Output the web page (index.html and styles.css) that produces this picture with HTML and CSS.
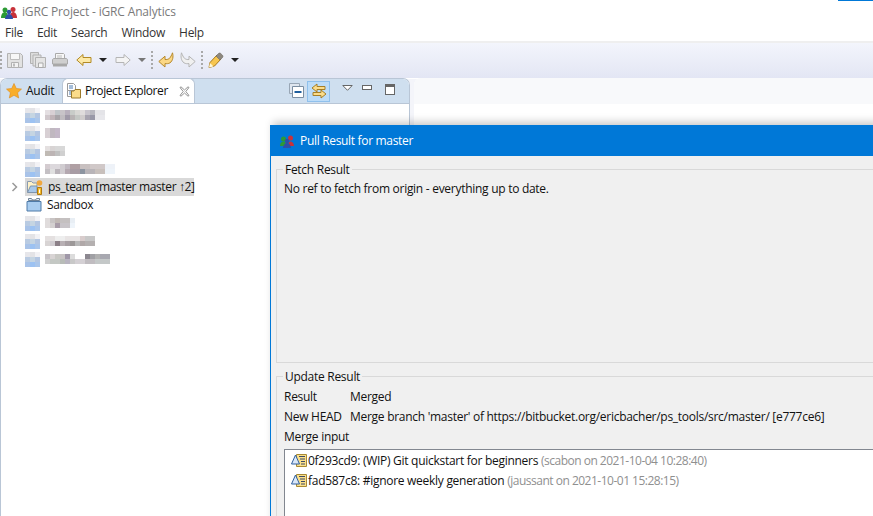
FILE: index.html
```html
<!DOCTYPE html>
<html lang="en">
<head>
<meta charset="utf-8">
<title>iGRC Project - iGRC Analytics</title>
<link rel="stylesheet" href="styles.css">
</head>
<body>
<div class="app">
  <div class="titlebar">
    <svg class="ico16" viewBox="0 0 16 16"><circle cx="4" cy="6" r="2.500" fill="#2c9a35"/><circle cx="12" cy="5.500" r="2.500" fill="#c8323a"/><circle cx="8" cy="8" r="2.200" fill="#2f4fa8"/><path d="M0 14c0-4 2-6 4-6s3 2 3 6z" fill="#2c9a35"/><path d="M9 14c0-4 1-6 3-6s4 2 4 6z" fill="#c8323a"/><path d="M4 15c0-3 2-5 4-5s4 2 4 5z" fill="#2f4fa8"/></svg>
    <span>iGRC Project - iGRC Analytics</span>
    <div class="accent"></div>
  </div>
  <nav class="menubar"><span>File</span><span>Edit</span><span>Search</span><span>Window</span><span>Help</span></nav>
  <div class="toolbar">
    <i class="grip g-first"></i>
    <svg class="ico16 t-save" viewBox="0 0 16 16"><path d="M.5 1.500h13l2 2v12H.5z" fill="#e2e2e2" stroke="#b2b2b2"/><path d="M3.500 1.500h9v6h-9z" fill="#f7f7f7" stroke="#bdbdbd"/><path d="M4.500 10.500h7v5h-7z" fill="#f2f2f2" stroke="#b2b2b2"/><path d="M6 11.500h2v3H6z" fill="#bbb"/></svg>
    <svg class="ico16 t-all" viewBox="0 0 16 16"><path d="M.5.500h8v3h-4v8h-4z" fill="#dcdcdc" stroke="#b2b2b2"/><path d="M3 3h8v3H6v8H3z" fill="#e2e2e2" stroke="#b2b2b2"/><path d="M5.500 5.500h10v10h-10z" fill="#e4e4e4" stroke="#b2b2b2"/><path d="M8.500 11h4.500v4.500H8.500z" fill="#f6f6f6" stroke="#aaa"/></svg>
    <svg class="ico16 t-print" viewBox="0 0 16 16"><path d="M3.500 1.500h8l1 1v5h-9z" fill="#f7f7f7" stroke="#aaa"/><path d="M5 4h5M5 6h5" stroke="#bbb"/><path d="M.5 8c0-1 .8-1.500 1.500-1.500h12c.8 0 1.500.5 1.500 1.500v4H.5z" fill="#cfcfcf" stroke="#aaa"/><path d="M1 12h14v2.500H1z" fill="#a8a8a8"/></svg>
    <svg class="ico16 t-back" viewBox="0 0 16 16"><path d="M.8 8L7 2.500V5.500h8v5H7v3z" fill="#fde9a6" stroke="#b28a25"/></svg>
    <b class="caret"></b>
    <svg class="ico16 t-fwd" viewBox="0 0 16 16"><path d="M15.200 8L9 2.500V5.500H1v5h8v3z" fill="#f4f4f4" stroke="#b5b5b5"/></svg>
    <b class="caret dim"></b>
    <i class="grip g-mid"></i>
    <svg class="ico16 t-undo" viewBox="0 0 16 16"><path d="M14.500 .8c1 3.500 .5 8-2.500 10-1.500 1-3.500 1-5 .8V15L.8 9.500 7 4.200v3.300c1.500.2 3 0 4.500-1.200 1.200-1.200 2-3 3-5.500z" fill="#fbd784" stroke="#b6882a"/></svg>
    <svg class="ico16 t-redo" viewBox="0 0 16 16"><path d="M1.500 .8c-1 3.500-.5 8 2.500 10 1.500 1 3.500 1 5 .8V15l6.200-5.500L9 4.200v3.300C7.500 7.700 6 7.500 4.500 6.300 3.300 5.100 2.500 3.300 1.500.8z" fill="#f0f0f0" stroke="#b5b5b5"/></svg>
    <i class="grip g-last"></i>
    <svg class="ico16 t-pin" viewBox="0 0 16 16"><path d="M2 10.500L9 3l4 4-6.500 7L1 15.500z" fill="#f7c64f" stroke="#a87a1c"/><path d="M8 4l4 4 2.500-2.500c.6-.7.6-1.500 0-2.200l-1.800-1.800c-.7-.6-1.500-.6-2.200 0z" fill="#8d887e" stroke="#6a665e" stroke-width=".6"/><path d="M1 15.500l1-4.500 3.500 3.500z" fill="#fff8d8"/></svg>
    <b class="caret"></b>
  </div>
  <main class="workbench">
    <section class="explorer">
      <header class="tabbar">
        <div class="tab tab-audit">
          <svg class="ico16" viewBox="0 0 16 16"><path d="M8 .5l2.300 5 5.200.6-3.900 3.600 1.100 5.300L8 12.300 3.300 15l1.100-5.300L.5 6.100l5.200-.6z" fill="#f9ae2a" stroke="#df8a18" stroke-width=".6"/></svg>
          <span>Audit</span>
        </div>
        <div class="tab tab-active">
          <svg class="ico16" viewBox="0 0 16 16"><path d="M1.500 .5h6l2 2v5h-8z" fill="#fff" stroke="#9a9a9a"/><path d="M1.500 7.500v6h4" fill="none" stroke="#9a9a9a"/><path d="M3 3h4M3 5h4M3 9h2M3 11h2" stroke="#4a7cb5"/><path d="M5.500 8h2.500l1-1.500h5.500V15H5.500z" fill="#fbdc8a" stroke="#9c7a2a"/></svg>
          <span>Project Explorer</span>
          <svg class="closex" viewBox="0 0 11 11"><path d="M1 1.500L2 .8 5.500 4 9 .8l1 .7L6.800 5.500 10 9.500 9 10.200 5.500 7 2 10.200l-1-.7 3.200-4z" fill="#fff" stroke="#777" stroke-width=".8"/></svg>
        </div>
        <div class="viewtools">
          <svg class="ico16" viewBox="0 0 16 16"><path d="M.5 .5h10v10H.5z" fill="#dfe6ef" stroke="#98a6b5"/><path d="M3.500 3.500h11v11h-11z" fill="#fff" stroke="#7b8ea2"/><path d="M5.500 9h7" stroke="#1f5f9e" stroke-width="2"/></svg>
          <span class="toggled"><svg class="ico16" viewBox="0 0 16 16"><path d="M1 5l5-4v2.500h8v3H6V9z" fill="#fbdc8a" stroke="#a57f28"/><path d="M15 11l-5-4v2.500H2v3h8V15z" fill="#fbdc8a" stroke="#a57f28"/></svg></span>
          <svg class="viewmenu" viewBox="0 0 11 6"><path d="M.8.500h9.400L5.500 5.300z" fill="#fff" stroke="#666"/></svg>
          <i class="minbtn"></i>
          <i class="maxbtn"></i>
        </div>
      </header>
      <ul class="tree">
        <li class="row"><i class="pix"></i><i class="blur b1"></i></li>
        <li class="row"><i class="pix"></i><i class="blur b2"></i></li>
        <li class="row"><i class="pix"></i><i class="blur b3"></i></li>
        <li class="row"><i class="pix"></i><i class="blur b4"></i></li>
        <li class="row selected">
          <svg class="twisty" viewBox="0 0 8 10"><path d="M1.500 1l4 4-4 4" fill="none" stroke="#999" stroke-width="1.500"/></svg>
          <svg class="ico16 proj" viewBox="0 0 16 16"><path d="M.5 13.500V2.500h4l1.500 1.500h4V7" fill="#fff2c8" stroke="#8a9bb0"/><path d="M.5 13.500L3.500 7H10v6.500z" fill="#a8c8ea" stroke="#7f95ad"/><path d="M10.500 8.500h4v7h-4z" fill="#f4bb2e" stroke="#b27a10"/><path d="M12 10.500h1v3.500h-1z" fill="#fff"/><circle cx="12.500" cy="4" r="2.800" fill="#f0a840"/></svg>
          <span>ps_team [master master ↑2]</span>
        </li>
        <li class="row">
          <svg class="ico16 proj sandbox" viewBox="0 0 16 16"><path d="M2.500 3.500V1.500h3l1 1.500h3l1-1.500h3v2z" fill="#e8eef5" stroke="#6f8296"/><path d="M1 4.500h14v9.500H1z" fill="#a9cdf0" stroke="#4f7ba8"/></svg>
          <span>Sandbox</span>
        </li>
        <li class="row"><i class="pix"></i><i class="blur b5"></i></li>
        <li class="row"><i class="pix"></i><i class="blur b6"></i></li>
        <li class="row"><i class="pix"></i><i class="blur b7"></i></li>
      </ul>
    </section>
    <section class="editor"><div class="editor-head"></div></section>
  </main>
  <div class="dialog">
    <div class="dialog-title">
      <svg class="ico16" viewBox="0 0 16 16"><circle cx="4.500" cy="6" r="2.500" fill="#2c9a35"/><circle cx="11.500" cy="5" r="2.500" fill="#c8323a"/><circle cx="8" cy="8" r="2.200" fill="#2f4fa8"/><path d="M1 13c0-3 1.500-4.500 3.500-4.500S7 10 7 13z" fill="#2c9a35"/><path d="M9 13c0-3 1-4.500 2.500-4.500S15 10 15 13z" fill="#c8323a"/><path d="M4 15c0-3 2-5 4-5s4 2 4 5z" fill="#2f4fa8"/></svg>
      <span>Pull Result for master</span>
    </div>
    <div class="dialog-body">
      <fieldset class="group fetch">
        <legend>Fetch Result</legend>
        <p>No ref to fetch from origin - everything up to date.</p>
      </fieldset>
      <fieldset class="group update">
        <legend>Update Result</legend>
        <dl class="facts">
          <dt>Result</dt><dd>Merged</dd>
          <dt>New HEAD</dt><dd>Merge branch 'master' of https://bitbucket.org/ericbacher/ps_tools/src/master/ [e777ce6]</dd>
        </dl>
        <div class="input-label">Merge input</div>
        <div class="commits">
          <div class="commit">
            <svg class="ico16" viewBox="0 0 16 16"><path d="M5.500 1.500h10v12h-10z" fill="#fbe08a" stroke="#a98a35"/><path d="M8 3.500h6M9 6h5M10 8.500h4M10 11h4" stroke="#3c4a66"/><path d="M4.500 2L.5 11h8z" fill="#dbe8f8" stroke="#2f5f9f"/></svg>
            <span>0f293cd9: (WIP) Git quickstart for beginners <em>(scabon on 2021-10-04 10:28:40)</em></span>
          </div>
          <div class="commit">
            <svg class="ico16" viewBox="0 0 16 16"><path d="M5.500 1.500h10v12h-10z" fill="#fbe08a" stroke="#a98a35"/><path d="M8 3.500h6M9 6h5M10 8.500h4M10 11h4" stroke="#3c4a66"/><path d="M4.500 2L.5 11h8z" fill="#dbe8f8" stroke="#2f5f9f"/></svg>
            <span>fad587c8: #ignore weekly generation <em>(jaussant on 2021-10-01 15:28:15)</em></span>
          </div>
        </div>
      </fieldset>
    </div>
  </div>
</div>
</body>
</html>
```

FILE: styles.css
```css
* { box-sizing: border-box; }
html, body { margin: 0; padding: 0; height: 100%; overflow: hidden; }
body { font: 12px/16px "Open Sans", "Noto Sans", sans-serif; letter-spacing: -.28px; color: #111; background: #fff; }
.app { position: relative; width: 873px; height: 516px; overflow: hidden; display: flex; flex-direction: column; }
.ico16 { width: 16px; height: 16px; flex: none; display: block; }

.titlebar { height: 23px; display: flex; align-items: center; gap: 5px; padding: 1px 0 0 1px; color: #7a7a7a; position: relative; flex: none; letter-spacing: -.16px; }
.accent { position: absolute; right: 0; top: 0; width: 35px; height: 1px; background: #0078d7; }
.menubar { height: 18px; display: flex; gap: 14px; padding: 2px 0 0 5px; align-items: center; color: #333; flex: none; }

.toolbar { height: 37px; border-top: 2px solid #efefef; background: linear-gradient(#f3f5fc, #e3e6f4); display: flex; align-items: center; flex: none; padding-bottom: 2px; }
.grip { width: 2px; height: 18px; border-left: 2px dotted #a9a9a9; flex: none; }
.g-first { margin-left: 0; }
.t-save { margin-left: 5px; }
.t-all { margin-left: 7px; }
.t-print { margin-left: 6px; }
.t-back { margin-left: 8px; }
.t-fwd { margin-left: 8px; }
.g-mid { margin-left: 5px; }
.t-undo { margin-left: 5px; }
.t-redo { margin-left: 6px; }
.g-last { margin-left: 5px; }
.t-pin { margin-left: 5px; }
.caret { width: 0; height: 0; border: 4px solid transparent; border-top: 4px solid #222; border-bottom: 0; margin: 1px 0 0 7px; flex: none; }
.caret.dim { border-top-color: #777; }

.workbench { flex: 1; display: flex; gap: 4px; background: #f4f5fa; min-height: 0; border-top: 1px solid #fff; }
.explorer { width: 410px; background: #fff; border: 1px solid #b9c6d6; border-width: 1px 1px 0 1px; border-radius: 7px 7px 0 0; display: flex; flex-direction: column; flex: none; margin-top: -1px; }
.tabbar { height: 25px; background: #cfdfef; display: flex; align-items: flex-start; border-radius: 6px 6px 0 0; border-bottom: 1px solid #b9c6d6; flex: none; }
.tab { display: flex; align-items: center; white-space: nowrap; }
.tab-audit { width: 61px; height: 24px; padding-left: 5px; gap: 4px; }
.tab-active { width: 133px; padding-left: 3px; background: #fff; border: 1px solid #b9c6d6; border-bottom: 0; border-radius: 6px 6px 0 0; height: 25px; gap: 3px; margin-top: -1px; letter-spacing: -.4px; }
.closex { width: 11px; height: 11px; margin-left: 8px; flex: none; }
.viewtools { margin-left: auto; display: flex; align-items: center; height: 24px; padding-right: 14px; }
.toggled { width: 23px; height: 21px; background: #bcdcf8; border: 1px solid #8fc0ec; display: flex; align-items: center; justify-content: center; margin-left: 2px; }
.viewmenu { width: 11px; height: 6px; margin: -6px 0 0 12px; flex: none; }
.minbtn { width: 10px; height: 5px; margin: -7px 0 0 9px; border: 1px solid #666; background: #fff; flex: none; }
.maxbtn { width: 10px; height: 11px; margin: -3px 0 0 13px; border: 1px solid #666; border-top-width: 3px; background: #fff; flex: none; }

.tree { list-style: none; margin: 0; padding: 2px 0 0 0; }
.row { height: 18px; display: flex; align-items: center; padding-left: 24px; position: relative; letter-spacing: -.36px; }
.row.selected { background: #d9d9d9; margin-left: 24px; width: 169px; padding-left: 0; }
.row span { margin-left: 5px; white-space: nowrap; }
.proj { margin-left: 2px; }
.sandbox { margin-left: 1px; }
.twisty { position: absolute; left: -14px; top: 4px; width: 8px; height: 10px; }
.pix { width: 15px; height: 15px; flex: none; background:
  linear-gradient(90deg, #e6e6ea 33.3%, #e3e3e6 33.3% 66.6%, #f2f2f5 66.6%) top / 100% 5px no-repeat,
  linear-gradient(90deg, #b9cbe2 33.3%, #c5d5e2 33.3% 66.6%, #b3c6e2 66.6%) center / 100% 5px no-repeat,
  linear-gradient(90deg, #a9c3e8 33.3%, #9cc2f2 33.3% 66.6%, #aac6ea 66.6%) bottom / 100% 5px no-repeat; }
.blur { height: 10px; margin-left: 5px; }
.b1 { width: 60px; background:
  linear-gradient(90deg, #e4dfe2 0 5px, #d8d0d4 5px 10px, #c0c4c8 10px 15px, #c8c4c8 15px 20px, #b8b0bc 20px 25px, #c8ccc8 25px 30px, #d8d8d4 30px 35px, #e0dcdc 35px 40px, #c8c4cc 40px 45px, #b8b8c0 45px 50px, #e4e4e8 50px 60px) top / 100% 5px no-repeat,
  linear-gradient(90deg, #d0c8cc 0 5px, #c0b4b8 5px 10px, #a8a4a8 10px 15px, #c0bcc0 15px 20px, #a09aa8 20px 25px, #b8b4b4 25px 30px, #c4c8c4 30px 35px, #d0cccc 35px 40px, #a8a4b0 40px 45px, #9898a8 45px 50px, #e8e8ec 50px 60px) bottom / 100% 5px no-repeat; }
.b2 { width: 15px; background: linear-gradient(90deg, #d8d0d4 0 5px, #c0b8c0 5px 10px, #c4b8c8 10px 15px); }
.b3 { width: 20px; background:
  linear-gradient(90deg, #e4e0e0 0 5px, #d8d4d4 5px 10px, #d8d8d8 10px 20px) top / 100% 5px no-repeat,
  linear-gradient(90deg, #c0bab4 0 5px, #bcb4b4 5px 10px, #c0c0c0 10px 15px, #d0d0d0 15px 20px) bottom / 100% 5px no-repeat; }
.b4 { width: 70px; background:
  linear-gradient(90deg, #d4ccd0 0 5px, #dcd8dc 5px 15px, #d0ccd0 15px 20px, #c0b8c0 20px 25px, #b0a0a4 25px 35px, #c8c0c0 35px 45px, #d0c8c8 45px 60px, #eef2f8 60px 70px) top / 100% 5px no-repeat,
  linear-gradient(90deg, #c4c0c4 0 5px, #e0e0e0 5px 10px, #bab4ba 10px 15px, #d0ccd0 15px 20px, #b4a8b0 20px 25px, #a89ca4 25px 35px, #8c94a0 35px 40px, #b8b4b8 40px 50px, #c8c0bc 50px 60px, #eef4fa 60px 70px) bottom / 100% 5px no-repeat; }
.b5 { width: 30px; background:
  linear-gradient(90deg, #e0dcdc 0 5px, #c8c4c4 5px 10px, #c0b8b4 10px 15px, #c4c0c0 15px 25px, #e8eef4 25px 30px) top / 100% 5px no-repeat,
  linear-gradient(90deg, #e0dcdc 0 5px, #d4d0d0 5px 10px, #a89ca8 10px 15px, #c8c4c8 15px 25px, #eef4fa 25px 30px) bottom / 100% 5px no-repeat; }
.b6 { width: 50px; background:
  linear-gradient(90deg, #e4e0e0 0 10px, #eeeeee 10px 20px, #e8e4e4 20px 35px, #d8cccc 35px 40px, #c8c8c8 40px 50px) top / 100% 5px no-repeat,
  linear-gradient(90deg, #d8d4d4 0 5px, #d0ccd0 5px 10px, #8c8088 10px 15px, #b8b0b4 15px 20px, #a8a0a4 20px 25px, #9c9898 25px 30px, #b8b8b8 30px 35px, #b0a8a8 35px 40px, #b4b0b0 40px 50px) bottom / 100% 5px no-repeat; }
.b7 { width: 65px; background:
  linear-gradient(90deg, #c8c4c8 0 5px, #d8d4d4 5px 10px, #c8c8c4 10px 15px, #c8c4c4 15px 20px, #a098a8 20px 25px, #dcdcdc 25px 30px, #fff 30px 40px, #8c8890 40px 45px, #a0a0a4 45px 50px, #b0b0b0 50px 55px, #a8a8b0 55px 65px) top / 100% 5px no-repeat,
  linear-gradient(90deg, #d0d0d0 0 5px, #c4c8c4 5px 15px, #b8bcb8 15px 20px, #b8b4c0 20px 25px, #c8c8c8 25px 30px, #d4d0d4 30px 40px, #c0bcc0 40px 50px, #c4c8c8 50px 65px) bottom / 100% 5px no-repeat; }

.editor { flex: 1; background: #fff; border-radius: 7px 0 0 0; margin-top: -1px; }
.editor-head { height: 26px; background: #f8f9fb; border-radius: 7px 0 0 0; }

.dialog { position: absolute; left: 270px; top: 125px; width: 640px; height: 420px; background: #f0f0f0; border-left: 1px solid #0078d7; box-shadow: 0 -6px 8px -3px rgba(0,0,0,.22); display: flex; flex-direction: column; }
.dialog-title { height: 31px; background: #0078d7; color: #fff; display: flex; align-items: center; gap: 5px; padding-left: 8px; flex: none; letter-spacing: -.32px; }
.dialog-body { padding: 5px 0 0 5px; display: flex; flex-direction: column; gap: 5px; }
.group { margin: 0; border: 1px solid #d9d9d9; padding: 0 0 0 7px; min-width: 0; }
.group legend { padding: 1px 2px 0; margin-left: -1px; line-height: 16px; }
.fetch { height: 202px; }
.fetch p { margin: 3px 0 0 0; }
.facts { display: grid; grid-template-columns: 66px 1fr; margin: 2px 0 0; line-height: 20px; white-space: nowrap; }
.facts dt, .facts dd { margin: 0; }
.input-label { line-height: 20px; }
.commits { background: #fff; border: 1px solid #828790; height: 80px; margin-top: 2px; padding: 1px 0 0 6px; }
.commit { height: 20px; display: flex; align-items: center; gap: 1px; white-space: nowrap; }
.commit em { font-style: normal; color: #8f8f8f; letter-spacing: -.5px; }
```
